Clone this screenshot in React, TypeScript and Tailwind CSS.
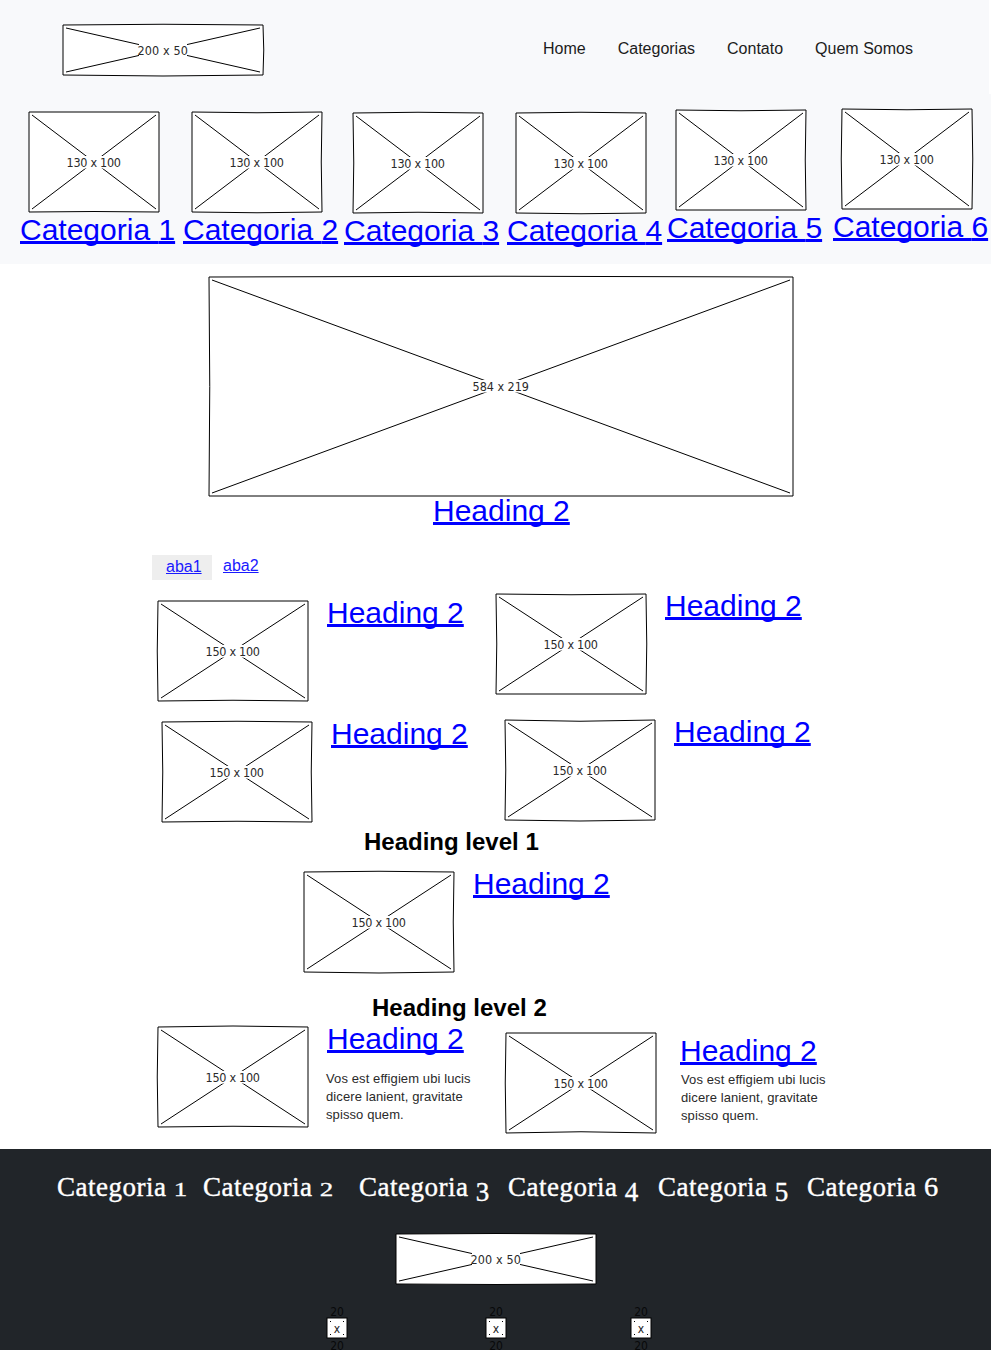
import React from "react";

type Bow = [number, number, number, number];

interface WireProps {
  w: number;
  h: number;
  bow?: Bow;
  labelWidth?: number;
}

/* Sketch-style image placeholder: slightly bowed frame, crossed diagonals, size label. */
function Wire({ w, h, bow = [0, 0, 0, 0], labelWidth = 54 }: WireProps) {
  const [t, r, b, l] = bow;
  const cx = w / 2;
  const cy = Math.floor(h / 2);
  return (
    <svg width={w} height={h} className="block shrink-0 overflow-visible">
      <path
        d={`M0 0Q${cx} ${t} ${w} 0Q${w + r} ${h / 2} ${w} ${h}Q${cx} ${h + b} 0 ${h}Q${l} ${h / 2} 0 0Z`}
        fill="#fff"
        stroke="#000"
        strokeLinejoin="round"
      />
      <path d={`M3 3L${w - 3} ${h - 3}M${w - 3} 3L3 ${h - 3}`} stroke="#000" fill="none" />
      <rect x={cx - labelWidth / 2 + 1} y={cy - 6} width={labelWidth - 2} height={12.5} fill="#fff" />
      <text
        x={cx - labelWidth / 2 - 0.5}
        y={cy + 5}
        textLength={labelWidth + 0.5}
        fill="#2a2a2a"
        className="font-['DejaVu_Sans_Condensed','DejaVu_Sans',sans-serif] text-[12.5px] [font-stretch:condensed]"
      >
        {w} x {h}
      </text>
    </svg>
  );
}

function TinyWire() {
  const label = "font-['DejaVu_Sans_Condensed','DejaVu_Sans',sans-serif] text-[12px] [font-stretch:condensed]";
  return (
    <svg width={20} height={20} className="block shrink-0 overflow-visible">
      <rect width={20} height={20} fill="#fff" stroke="#000" />
      <path d="M3 3h1v1h-1zM16 3h1v1h-1zM3 16h1v1h-1zM16 16h1v1h-1z" fill="#000" />
      <text x={10} y={-2} textAnchor="middle" fill="#08090a" className={label}>20</text>
      <text x={10} y={15} textAnchor="middle" fill="#222" className={label}>x</text>
      <text x={10} y={32} textAnchor="middle" fill="#08090a" className={label}>20</text>
    </svg>
  );
}

function BigLink({ children, className = "" }: { children: React.ReactNode; className?: string }) {
  return (
    <a
      href="#"
      className={`block whitespace-nowrap text-[30px] leading-[30px] text-[#0000ff] underline decoration-[3px] underline-offset-[1px] [text-decoration-skip-ink:none] ${className}`}
    >
      {children}
    </a>
  );
}

function Card({ bow, className = "" }: { bow: Bow; className?: string }) {
  return (
    <div className={`flex items-start gap-[19px] ${className}`}>
      <Wire w={150} h={100} bow={bow} />
      <BigLink className="-mt-[3px]">Heading 2</BigLink>
    </div>
  );
}

const categories: { n: number; bow: Bow; place: string }[] = [
  { n: 1, bow: [0, 0, -1, 0], place: "mt-[18px]" },
  { n: 2, bow: [1.5, -1.5, 1.5, 0], place: "mt-[18px] ml-[8px]" },
  { n: 3, bow: [-1.5, 0, -1.5, 1.5], place: "mt-[19px] ml-[6px]" },
  { n: 4, bow: [-1.5, 0, 1.5, 0], place: "mt-[19px] ml-[8px]" },
  { n: 5, bow: [1.5, -1.5, 0, 0], place: "mt-[16px] ml-[5px]" },
  { n: 6, bow: [1.5, 1.5, 0, -1.5], place: "mt-[15px] ml-[11px]" },
];

const footerLinks: { n: number; box: string; digit: string }[] = [
  { n: 1, box: "w-[146px]", digit: "origin-[0%_78%] scale-y-[0.72]" },
  { n: 2, box: "w-[156px]", digit: "origin-[0%_78%] scale-y-[0.72]" },
  { n: 3, box: "w-[149px]", digit: "translate-y-[5px]" },
  { n: 4, box: "w-[150px]", digit: "translate-y-[5px]" },
  { n: 5, box: "w-[149px]", digit: "translate-y-[5px]" },
  { n: 6, box: "w-[140px]", digit: "origin-[0%_78%] scale-x-[1.05]" },
];

function Blurb({ className = "" }: { className?: string }) {
  return (
    <p className={`w-[160px] text-[13px] leading-[18px] tracking-[0.1px] text-[#2a2a2a] ${className}`}>
      Vos est effigiem ubi lucis
      <br />
      dicere lanient, gravitate
      <br />
      spisso quem.
    </p>
  );
}

export default function App() {
  return (
    <div className="flex h-[1350px] w-[991px] flex-col overflow-hidden bg-white font-['Liberation_Sans',Arial,sans-serif] text-black">
      <header className="flex h-[264px] shrink-0 flex-col">
        <div className="flex h-[94px] w-[989px] items-start bg-[#f8f9fb] pt-[25px] pl-[63px]">
          <Wire w={200} h={50} bow={[-1.5, 1.5, 2, 0]} labelWidth={50} />
          <nav className="mt-[12px] ml-[280px] flex gap-8 text-base text-[#1c1c1c]">
            <a href="#">Home</a>
            <a href="#">Categorias</a>
            <a href="#">Contato</a>
            <a href="#">Quem Somos</a>
          </nav>
        </div>
        <div className="flex flex-1 items-start bg-[#f8f9fb] pl-[20px]">
          {categories.map((c) => (
            <div key={c.n} className={`w-[155px] shrink-0 ${c.place}`}>
              <div className="pl-[9px]">
                <Wire w={130} h={100} bow={c.bow} />
              </div>
              <BigLink className="mt-[3px]">Categoria {c.n}</BigLink>
            </div>
          ))}
        </div>
      </header>

      <main className="flex h-[885px] shrink-0 flex-col">
        <section className="mt-[13px] ml-[209px] flex h-[278px] w-[584px] flex-col">
          <Wire w={584} h={219} bow={[-1.5, 0, 0, 1.5]} labelWidth={56} />
          <BigLink className="ml-[224px]">Heading 2</BigLink>
        </section>

        <div className="ml-[153px] flex h-[39px] items-start text-base leading-[24px] text-[#1a1aff]">
          <a href="#" className="-ml-px h-[25px] w-[60px] bg-[#eeeeee] pl-[14px] underline [text-decoration-skip-ink:none]">aba1</a>
          <a href="#" className="-mt-px ml-[11px] underline [text-decoration-skip-ink:none]">aba2</a>
        </div>

        <div className="flex h-[126px] items-start pl-[158px]">
          <Card bow={[0, 0, -1.5, -1.5]} className="mt-[7px] w-[338px]" />
          <Card bow={[1.5, 1.5, 0, 1.5]} />
        </div>
        <div className="flex h-[112px] items-start pl-[162px]">
          <Card bow={[-1.5, -1.5, -1.5, 1.5]} className="mt-[2px] w-[343px]" />
          <Card bow={[2.5, 0, 2, 1.5]} />
        </div>

        <h1 className="h-[40px] pl-[364px] text-2xl leading-[20px] font-bold">Heading level 1</h1>
        <Card bow={[-1.5, -1.5, 2, 0]} className="h-[126px] pl-[304px]" />
        <h2 className="h-[29px] pl-[372px] text-2xl leading-[20px] font-bold">Heading level 2</h2>

        <div className="flex items-start pl-[158px]">
          <div className="flex w-[348px] items-start">
            <Wire w={150} h={100} bow={[-2, 0, -1.5, -1.5]} />
            <div className="-mt-[3px] pl-[18px]">
              <BigLink className="ml-px">Heading 2</BigLink>
              <Blurb className="mt-[16px]" />
            </div>
          </div>
          <div className="mt-[6px] flex items-start">
            <Wire w={150} h={100} bow={[0, 0, -2.5, -1.5]} />
            <div className="mt-[3px] pl-[24px]">
              <BigLink>Heading 2</BigLink>
              <Blurb className="mt-[5px] ml-px" />
            </div>
          </div>
        </div>
      </main>

      <footer className="flex h-[201px] shrink-0 flex-col bg-[#212529]">
        <nav className="flex h-[85px] pt-[23px] pl-[57px] font-['Liberation_Serif',Georgia,serif] text-[27px] leading-[30px] tracking-[0.5px] text-white [-webkit-text-stroke:0.4px_white]">
          {footerLinks.map((f) => (
            <a key={f.n} href="#" className={`shrink-0 whitespace-nowrap ${f.box}`}>
              Categoria <span className={`inline-block ${f.digit}`}>{f.n}</span>
            </a>
          ))}
        </nav>
        <div className="pl-[396px]">
          <Wire w={200} h={50} bow={[-1, 0, 1, 0]} labelWidth={50} />
        </div>
        <div className="mt-[34px] flex pl-[327px]">
          <div className="w-[159px]"><TinyWire /></div>
          <div className="w-[145px]"><TinyWire /></div>
          <TinyWire />
        </div>
      </footer>
    </div>
  );
}
